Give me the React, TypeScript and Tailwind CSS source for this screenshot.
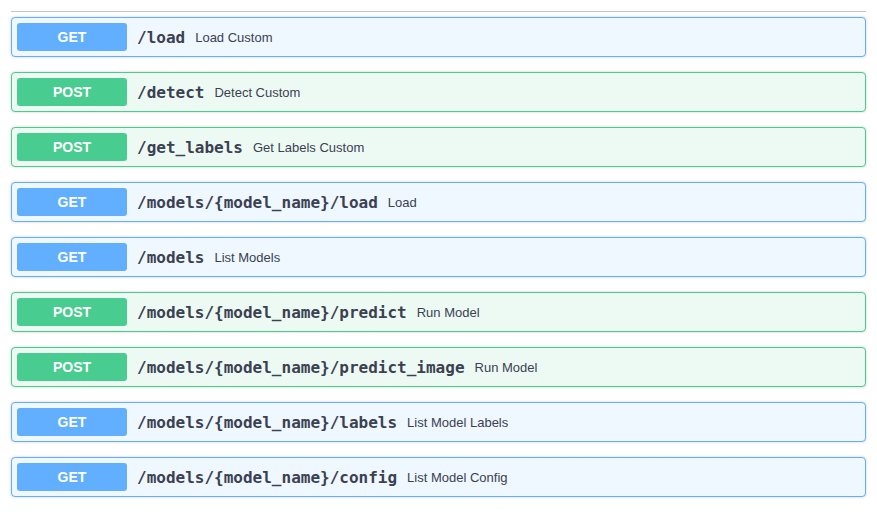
import React from "react";

type Op = { method: "GET" | "POST"; path: string; summary: string };

const ops: Op[] = [
  { method: "GET", path: "/load", summary: "Load Custom" },
  { method: "POST", path: "/detect", summary: "Detect Custom" },
  { method: "POST", path: "/get_labels", summary: "Get Labels Custom" },
  { method: "GET", path: "/models/{model_name}/load", summary: "Load" },
  { method: "GET", path: "/models", summary: "List Models" },
  { method: "POST", path: "/models/{model_name}/predict", summary: "Run Model" },
  { method: "POST", path: "/models/{model_name}/predict_image", summary: "Run Model" },
  { method: "GET", path: "/models/{model_name}/labels", summary: "List Model Labels" },
  { method: "GET", path: "/models/{model_name}/config", summary: "List Model Config" },
];

function Row({ op }: { op: Op }) {
  const isGet = op.method === "GET";
  return (
    <div
      className={
        "mb-[15px] flex h-[40px] items-center rounded-[4px] border p-[5px] shadow-[0_0_3px_rgba(0,0,0,0.19)] " +
        (isGet ? "border-[#61affe] bg-[#eff7ff]" : "border-[#49cc90] bg-[#edfaf4]")
      }
    >
      <div
        className={
          "flex h-[28px] w-[110px] shrink-0 items-center justify-center rounded-[3px] text-[14px] font-bold text-white " +
          (isGet ? "bg-[#61affe]" : "bg-[#49cc90]")
        }
        style={{ fontFamily: '"Liberation Sans", Arial, sans-serif' }}
      >
        {op.method}
      </div>
      <span
        className="pl-[10px] pr-[10px] pt-[2px] text-[16px] font-bold text-[#3b4151]"
        style={{ fontFamily: '"DejaVu Sans Mono", monospace' }}
      >
        {op.path}
      </span>
      <span
        className="pt-[2px] text-[13px] text-[#3b4151]"
        style={{ fontFamily: '"Liberation Sans", Arial, sans-serif' }}
      >
        {op.summary}
      </span>
    </div>
  );
}

export default function App() {
  return (
    <div className="h-[512px] w-[877px] overflow-hidden bg-white px-[11px] pt-[11px]">
      <div className="mb-[5px] h-px bg-[#c4c6cb]" />
      {ops.map((op, i) => (
        <Row key={i} op={op} />
      ))}
    </div>
  );
}
